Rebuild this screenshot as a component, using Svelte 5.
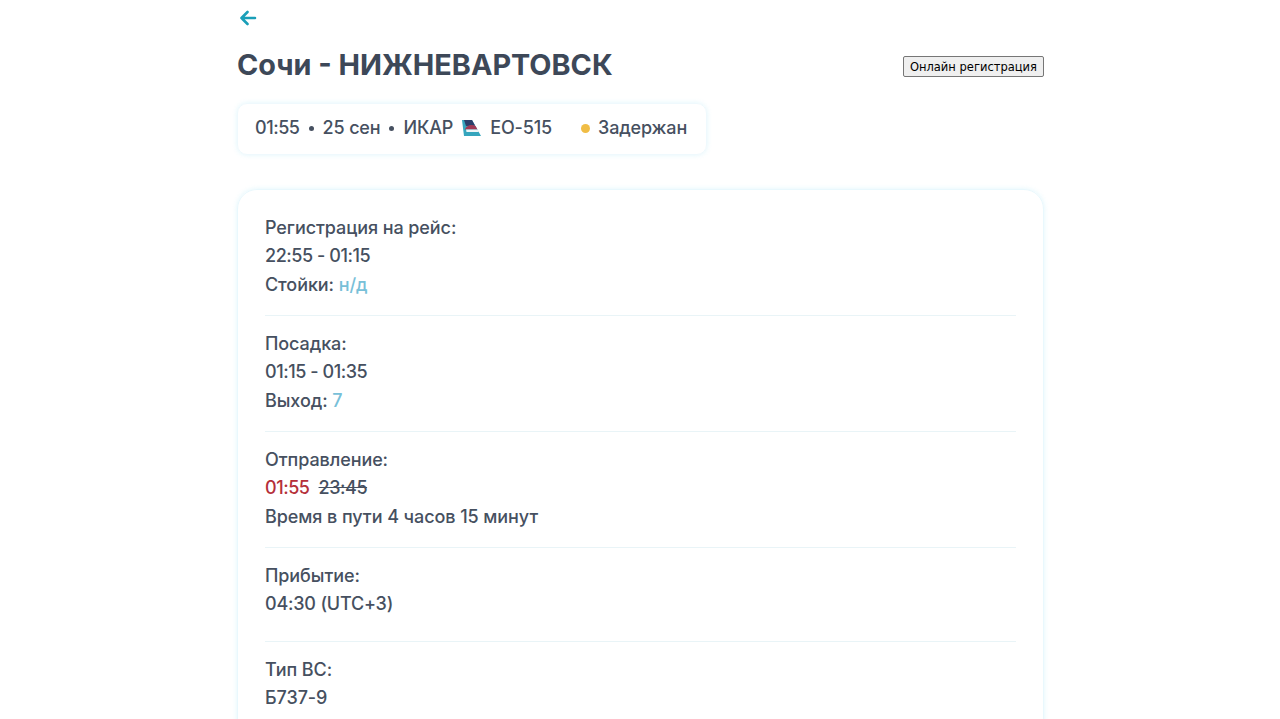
<script lang="ts">
  const sections = [
    { title: 'Регистрация на рейс:', time: '22:55 - 01:15', label: 'Стойки:', value: 'н/д' },
    { title: 'Посадка:', time: '01:15 - 01:35', label: 'Выход:', value: '7' }
  ]
</script>

<main class="page">
  <a class="back" href="#back" aria-label="Назад">
    <svg width="18" height="16" viewBox="0 0 18 16" fill="none" stroke="#1a9fb8" stroke-width="2.6" stroke-linecap="round" stroke-linejoin="round">
      <path d="M16 8H2.5M8.5 2 2.5 8l6 6" />
    </svg>
  </a>

  <div class="head">
    <h1>Сочи - НИЖНЕВАРТОВСК</h1>
    <button type="button">Онлайн регистрация</button>
  </div>

  <div class="summary">
    <span class="num">01:55</span>
    <i class="dot"></i>
    <span>25 сен</span>
    <i class="dot"></i>
    <span>ИКАР</span>
    <svg class="logo" width="19" height="18" viewBox="0 0 19 18">
      <path d="M0 1h10l9 16H2z" fill="#35a5bd" />
      <path d="M2 1h8l3 5.500-9 .5z" fill="#2b3f6b" />
      <path d="M3 10.500c1-4 7-5.500 10.500-3.500l2 3.500z" fill="#a03a55" />
      <path d="M4 10.500h11.500l1.500 2.500H4.500z" fill="#eef5f7" />
    </svg>
    <span class="flight">ЕО-515</span>
    <i class="status-dot"></i>
    <span>Задержан</span>
  </div>

  <section class="card">
    {#each sections as s}
      <div class="block">
        <p>{s.title}</p>
        <p class="num">{s.time}</p>
        <p>{s.label} <span class="link">{s.value}</span></p>
      </div>
    {/each}
    <div class="block">
      <p>Отправление:</p>
      <p class="num"><span class="late">01:55</span><s>23:45</s></p>
      <p>Время в пути 4 часов 15 минут</p>
    </div>
    <div class="block arrival">
      <p>Прибытие:</p>
      <p class="utc">04:30 (UTC+3)</p>
    </div>
    <div class="block">
      <p>Тип ВС:</p>
      <p>Б737-9</p>
    </div>
  </section>
</main>

<style>
  :global(body) {
    margin: 0;
    background: #fff;
    font-family: Inter, "Noto Sans", sans-serif;
    font-weight: 450;
    color: #465060;
  }

  .page {
    width: 807px;
    margin-left: 237px;
  }

  .back {
    display: block;
    height: 16px;
    padding: 10px 0 0 2px;
  }

  .head {
    display: flex;
    align-items: center;
    justify-content: space-between;
    margin-top: 8px;
    height: 60px;
  }

  h1 {
    margin: 0;
    font-size: 28.8px;
    font-weight: 700;
    color: #3d4858;
  }

  button {
    margin-top: 5px;
    padding: 0 6px;
    height: 21px;
    font: 11.5px "DejaVu Sans", sans-serif;
    color: #000;
    background: #efefef;
    border: 1px solid #767676;
    border-radius: 2px;
  }

  .summary {
    display: inline-flex;
    align-items: center;
    gap: 9px;
    box-sizing: border-box;
    height: 52px;
    margin-top: 9px;
    padding: 0 19px 3px 17px;
    font-size: 18px;
    letter-spacing: -0.15px;
    border: 1px solid #eff9fd;
    border-radius: 10px;
    box-shadow: 0 0 5px rgba(150, 225, 245, 0.3);
  }

  .dot {
    width: 5px;
    height: 5px;
    margin-top: 2px;
    border-radius: 50%;
    background: #465060;
  }

  .logo {
    margin-top: 1px;
  }

  .status-dot {
    width: 9px;
    height: 9px;
    margin: 2px -1px 0 20px;
    border-radius: 50%;
    background: #f0bd45;
  }

  .card {
    margin-top: 34px;
    padding: 23.6px 27px 22px;
    border: 1px solid #e9f8fd;
    border-radius: 20px;
    box-shadow: 0 0 5px rgba(150, 225, 245, 0.3);
    font-size: 18px;
    letter-spacing: -0.08px;
  }

  .block {
    padding-bottom: 15px;
    margin-bottom: 13.6px;
    border-bottom: 1px solid #e9f4f7;
  }

  .arrival {
    padding-bottom: 21.4px;
    margin-bottom: 14px;
  }

  .block:last-child {
    border-bottom: 0;
  }

  .block p {
    margin: 0;
    line-height: 28.8px;
  }

  .summary .num,
  .block .num {
    letter-spacing: -0.45px;
  }

  .block .utc {
    letter-spacing: -0.2px;
  }

  .link {
    color: #78c0d8;
  }

  .late {
    color: #b5303a;
    margin-right: 9px;
  }
</style>
